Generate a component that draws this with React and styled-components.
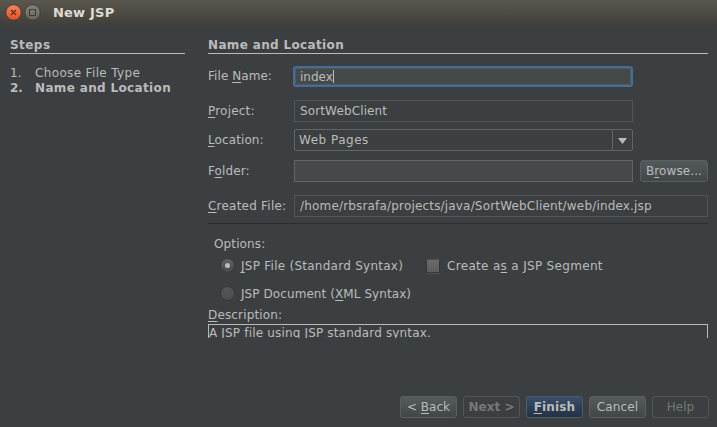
import React from "react";
import styled, { createGlobalStyle, css } from "styled-components";

const Global = createGlobalStyle`
  * { box-sizing: border-box; }
  body { margin: 0; background: #3c3f41; }
`;

const Dialog = styled.div`
  width: 717px;
  height: 427px;
  display: flex;
  flex-direction: column;
  background: #3c3f41;
  color: #bbbbbb;
  font: 12px/16px "DejaVu Sans", sans-serif;
  white-space: pre;
  overflow: hidden;
`;

const TitleBar = styled.header`
  flex: 0 0 26px;
  display: flex;
  align-items: center;
  padding: 0 0 1px 5px;
  gap: 2px;
  background: linear-gradient(#5a574e, #403e39);
`;

const Title = styled.h1`
  margin: 1px 0 0 10px;
  font-size: 13px;
  line-height: 16px;
  font-weight: bold;
  color: #dfdbd2;
  letter-spacing: 0.2px;
`;

const Text = styled.span`
  font-weight: ${(p) => (p.$bold ? "bold" : "normal")};
  letter-spacing: ${(p) => p.$track || 0}px;
`;

const Key = styled.u`
  text-decoration: underline 1px;
  text-underline-offset: 2px;
  text-decoration-skip-ink: none;
`;

const Body = styled.div`
  flex: 0 0 312px;
  display: grid;
  grid-template-columns: 175px 500px;
  column-gap: 23px;
  padding: 12px 0 0 10px;
`;

const Column = styled.section`
  display: flex;
  flex-direction: column;
`;

const Heading = styled.h2`
  margin: 0;
  height: 16px;
  border-bottom: 1px solid #bbbbbb;
  font-size: 12px;
  line-height: 15px;
`;

const Steps = styled.ol`
  list-style: none;
  margin: 11px 0 0;
  padding: 0;
`;

const Step = styled.li`
  display: grid;
  grid-template-columns: 25px 1fr;
  height: 15px;
`;

const Row = styled.div`
  display: flex;
  align-items: center;
  height: 22px;
  margin-top: ${(p) => p.$gap}px;
`;

const Label = styled.label`
  width: 86px;
  flex: none;
`;

const Field = styled.div`
  flex: none;
  width: ${(p) => p.$width || 339}px;
  height: 22px;
  display: flex;
  align-items: center;
  padding-left: 5px;
  border: 1px solid ${(p) => (p.$editable ? "#646464" : "#555555")};
  background: ${(p) => (p.$editable ? "#45494a" : "transparent")};
  ${(p) =>
    p.$focused &&
    css`
      width: 340px;
      height: 21px;
      margin: 1px 0 0 -1px;
      border: 2px solid #466d94;
      border-radius: 3px;
      box-shadow: inset 0 0 0 1px #4b5963;
    `}
`;

const Caret = styled.span`
  width: 1px;
  height: 13px;
  background: #bbbbbb;
`;

const Combo = styled.div`
  width: 339px;
  height: 22px;
  display: flex;
  border: 1px solid #646464;
  border-radius: 2px;
  padding-left: 4px;
  line-height: 21px;
`;

const ComboArrow = styled.div`
  width: 20px;
  margin-left: auto;
  border-left: 1px solid #646464;
  display: flex;
  align-items: center;
  justify-content: center;
  padding-top: 2px;
`;

const Button = styled.button`
  flex: none;
  width: 57px;
  height: 22px;
  padding: 0;
  border: 1px solid #5b5e60;
  border-radius: 3px;
  background: linear-gradient(#555a5c, #414648);
  color: #bbbbbb;
  font: inherit;
  line-height: 20px;
  ${(p) => p.$primary && css`
    background: linear-gradient(#384f6b, #233143);
    border-color: #4c5a69;
  `}
  ${(p) => p.disabled && css`
    background: transparent;
    border-color: #555555;
    color: #777777;
  `}
`;

const BrowseButton = styled(Button)`
  width: 68px;
  margin-left: 7px;
`;

const Separator = styled.div`
  height: 1px;
  margin-top: 6px;
  background: #2b2d2e;
`;

const OptionsTitle = styled.div`
  margin: 12px 0 0 6px;
  height: 16px;
`;

const Option = styled.label`
  display: flex;
  align-items: center;
  gap: 6px;
  height: 16px;
`;

const OptionRow = styled.div`
  display: flex;
  margin: ${(p) => p.$gap}px 0 0 12px;
`;

const SegmentOption = styled(Option)`
  margin-left: auto;
  width: 282px;
  gap: 7px;
`;

const Radio = styled.span`
  width: 15px;
  height: 15px;
  margin-bottom: 1px;
  border-radius: 50%;
  border: 1px solid #35383a;
  background: ${(p) => (p.$checked ? "linear-gradient(#5f6263, #48494a)" : "linear-gradient(#525658, #4b4f51)")};
  display: flex;
  align-items: center;
  justify-content: center;
`;

const Dot = styled.span`
  width: 5px;
  height: 5px;
  border-radius: 50%;
  background: #bdbdbd;
`;

const Check = styled.span`
  width: 14px;
  height: 14px;
  margin-bottom: 1px;
  border: 1px solid #343637;
  border-top-color: #505253;
  background: linear-gradient(#6b6b6b, #5c5c5c);
  box-shadow: 0 1px #4e5152;
`;

const DescriptionLabel = styled.label`
  height: 17px;
  margin-top: 5px;
`;

const Description = styled.div`
  height: 14px;
  overflow: hidden;
  border: 1px solid #bbbbbb;
  border-bottom: 0;
  line-height: 16px;
`;

const Footer = styled.footer`
  display: flex;
  justify-content: flex-end;
  gap: 6px;
  padding: 58px 8px 0 0;
`;

const CloseIcon = () => (
  <svg width="17" height="17" viewBox="0 0 17 17">
    <defs>
      <linearGradient id="close" x1="0" y1="0" x2="0" y2="1">
        <stop offset="0" stopColor="#f68560" />
        <stop offset="1" stopColor="#e4501f" />
      </linearGradient>
    </defs>
    <circle cx="8.5" cy="8.5" r="7.7" fill="url(#close)" stroke="#3d3934" strokeWidth="0.8" />
    <path d="M6 6l5 5M11 6l-5 5" stroke="#5b2c1a" strokeWidth="1.2" />
  </svg>
);

const MaximizeIcon = () => (
  <svg width="17" height="17" viewBox="0 0 17 17">
    <defs>
      <linearGradient id="max" x1="0" y1="0" x2="0" y2="1">
        <stop offset="0" stopColor="#86847b" />
        <stop offset="1" stopColor="#65635b" />
      </linearGradient>
    </defs>
    <circle cx="8.5" cy="8.5" r="7.7" fill="url(#max)" stroke="#3d3934" strokeWidth="0.8" />
    <rect x="5.5" y="5.5" width="6" height="6" fill="none" stroke="#3d3b35" />
  </svg>
);

export default function App() {
  return (
    <Dialog>
      <Global />
      <TitleBar>
        <CloseIcon />
        <MaximizeIcon />
        <Title>New JSP</Title>
      </TitleBar>
      <Body>
        <Column>
          <Heading><Text $bold $track={0.45}>Steps</Text></Heading>
          <Steps>
            <Step><Text>1.</Text><Text $track={0.35}>Choose File Type</Text></Step>
            <Step><Text $bold>2.</Text><Text $bold $track={0.35}>Name and Location</Text></Step>
          </Steps>
        </Column>
        <Column>
          <Heading><Text $bold $track={0.35}>Name and Location</Text></Heading>
          <Row $gap={11}>
            <Label><Text $track={0.06}>File <Key>N</Key>ame:</Text></Label>
            <Field $editable $focused><Text>index</Text><Caret /></Field>
          </Row>
          <Row $gap={13}>
            <Label><Text $track={0.2}><Key>P</Key>roject:</Text></Label>
            <Field><Text $track={0.13}>SortWebClient</Text></Field>
          </Row>
          <Row $gap={7}>
            <Label><Text $track={0.1}><Key>L</Key>ocation:</Text></Label>
            <Combo>
              <Text $track={0.5}>Web Pages</Text>
              <ComboArrow>
                <svg width="9" height="6" viewBox="0 0 9 6"><path d="M0 0h9L4.5 6z" fill="#bbbbbb" /></svg>
              </ComboArrow>
            </Combo>
          </Row>
          <Row $gap={9}>
            <Label><Text $track={0.12}>F<Key>o</Key>lder:</Text></Label>
            <Field $editable />
            <BrowseButton><Text $track={0.1}>B<Key>r</Key>owse...</Text></BrowseButton>
          </Row>
          <Row $gap={13}>
            <Label><Text $track={0.22}><Key>C</Key>reated File:</Text></Label>
            <Field $width={414}><Text $track={0.175}>/home/rbsrafa/projects/java/SortWebClient/web/index.jsp</Text></Field>
          </Row>
          <Separator />
          <OptionsTitle><Text $track={0.12}>Options:</Text></OptionsTitle>
          <OptionRow $gap={6}>
            <Option><Radio $checked><Dot /></Radio><Text $track={0.26}><Key>J</Key>SP File (Standard Syntax)</Text></Option>
            <SegmentOption><Check /><Text $track={0.32}>Create a<Key>s</Key> a JSP Segment</Text></SegmentOption>
          </OptionRow>
          <OptionRow $gap={12}>
            <Option><Radio /><Text $track={0.08}>JSP Document (<Key>X</Key>ML Syntax)</Text></Option>
          </OptionRow>
          <DescriptionLabel><Text $track={0.15}><Key>D</Key>escription:</Text></DescriptionLabel>
          <Description><Text $track={0.17}>A JSP file using JSP standard syntax.</Text></Description>
        </Column>
      </Body>
      <Footer>
        <Button><Text>&lt; <Key>B</Key>ack</Text></Button>
        <Button disabled><Text $bold>Next &gt;</Text></Button>
        <Button $primary><Text $bold $track={0.15}><Key>F</Key>inish</Text></Button>
        <Button><Text $track={0.15}>Cancel</Text></Button>
        <Button disabled><Text>Help</Text></Button>
      </Footer>
    </Dialog>
  );
}
